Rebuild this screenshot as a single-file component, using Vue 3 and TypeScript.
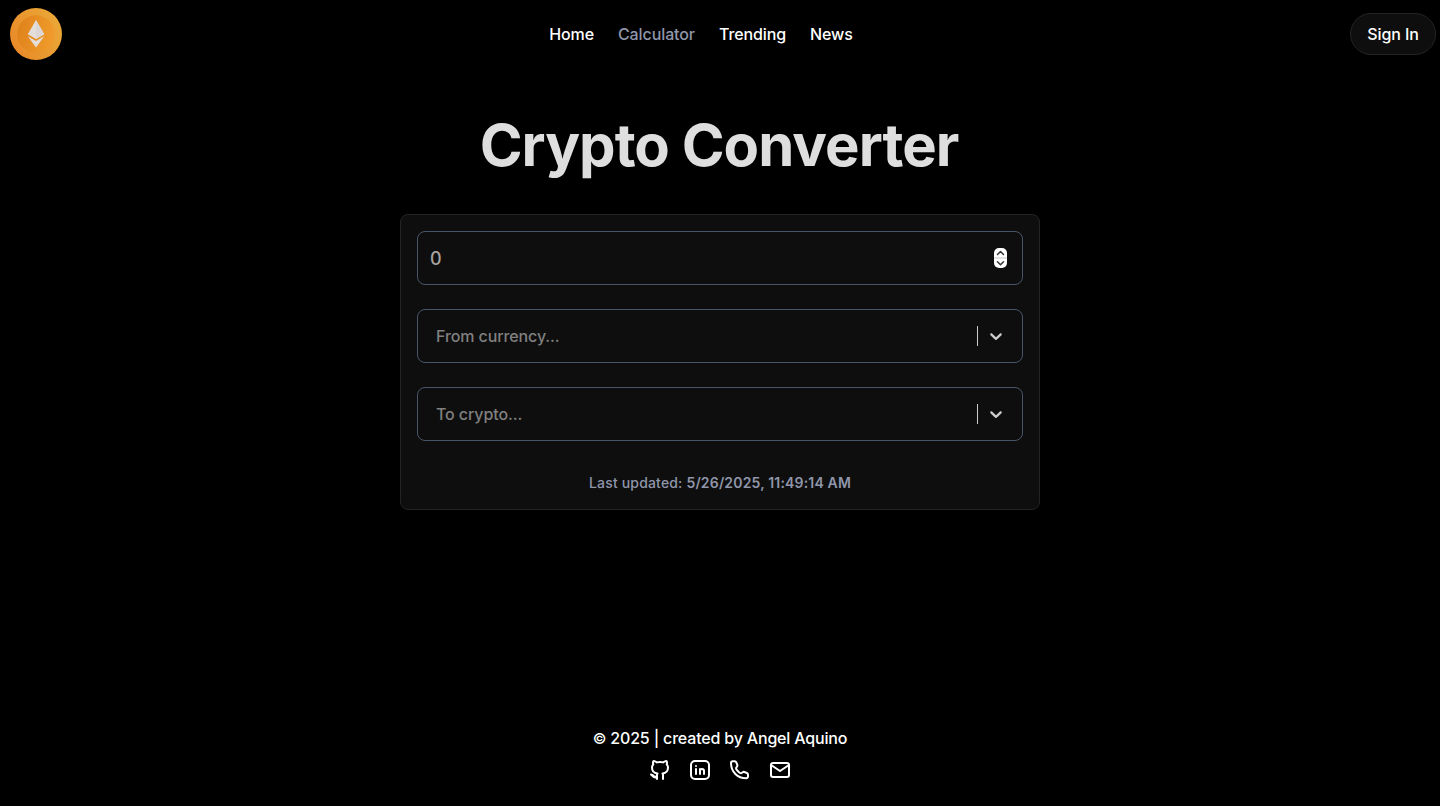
<script setup lang="ts">
import { ref } from 'vue'

interface NavItem {
  label: string
  active?: boolean
}

interface SocialIcon {
  name: string
  paths: string[]
}

const navItems: NavItem[] = [
  { label: 'Home' },
  { label: 'Calculator', active: true },
  { label: 'Trending' },
  { label: 'News' },
]

const selects: string[] = ['From currency...', 'To crypto...']

const socials: SocialIcon[] = [
  {
    name: 'GitHub',
    paths: [
      'M9 21v-3.500c-.1-.8-.1-1.400.5-2-2.800-.3-5.500-1.400-5.500-6 0-1.200.5-2.300 1.300-3.200-.4-1-.4-2.200.1-3.200 0 0 1.100-.3 3.500 1.300a12.300 12.300 0 0 1 6.200 0c2.400-1.600 3.500-1.300 3.500-1.300.5 1 .5 2.200.1 3.200.8.9 1.300 2 1.300 3.200 0 4.600-2.700 5.700-5.500 6 .6.6.5 1 .5 2V21',
      'M9 19.200c-4.300 1.200-4.100-2-6-2.700M9 18.500c-2.500.6-3.400-.3-4.300-1.500',
    ],
  },
  {
    name: 'LinkedIn',
    paths: [
      'M7 3h10a4 4 0 0 1 4 4v10a4 4 0 0 1-4 4H7a4 4 0 0 1-4-4V7a4 4 0 0 1 4-4z',
      'M8 11v5M8 8v.01M12 16v-5M16 16v-3a2 2 0 1 0-4 0',
    ],
  },
  {
    name: 'Phone',
    paths: [
      'M4.800 3.300h1.900a1.800 1.800 0 0 1 1.600 1.100l1 2.500a1.700 1.700 0 0 1-.4 1.800c-1.100 1.100-1.200 1.800-.3 3 .8 1.100 1.900 2.200 3 3 1.200.9 1.900.8 3-.3a1.700 1.700 0 0 1 1.800-.4l2.500 1a1.800 1.800 0 0 1 1.100 1.600v1.900a1.800 1.800 0 0 1-1.800 1.800C9.500 20.300 3 13.800 3 5.100a1.800 1.800 0 0 1 1.800-1.800z',
    ],
  },
  {
    name: 'Email',
    paths: [
      'M5 5h14a2 2 0 0 1 2 2v10a2 2 0 0 1-2 2H5a2 2 0 0 1-2-2V7a2 2 0 0 1 2-2z',
      'M3 7l9 6 9-6',
    ],
  },
]

const amount = ref<string>('')
</script>

<template>
  <div class="page">
    <header class="header">
      <div class="side">
        <a class="logo" aria-label="Home">
          <svg width="52" height="52" viewBox="0 0 52 52">
            <defs>
              <linearGradient id="rim" x1="0.1" y1="0.7" x2="0.9" y2="0.3">
                <stop offset="0" stop-color="#e98c2a" />
                <stop offset="1" stop-color="#eaa636" />
              </linearGradient>
              <linearGradient id="face" x1="0" y1="0.3" x2="1" y2="0.5">
                <stop offset="0" stop-color="#df821b" />
                <stop offset="1" stop-color="#f09c2c" />
              </linearGradient>
            </defs>
            <circle cx="26" cy="26" r="26" fill="url(#rim)" />
            <circle cx="26" cy="26" r="18.700" fill="url(#face)" />
            <path d="M26 12l-8.200 14.200L26 31l8.200-4.800z" fill="#e4dedb" />
            <path d="M26 12v19l8.200-4.800z" fill="#dcd7d6" />
            <path d="M17.800 28.200L26 39.500l8.200-11.300L26 33z" fill="#e4dedb" />
          </svg>
        </a>
      </div>
      <nav class="nav">
        <a v-for="item in navItems" :key="item.label" :class="{ active: item.active }">{{ item.label }}</a>
      </nav>
      <div class="side right">
        <button class="sign-in" type="button">Sign In</button>
      </div>
    </header>

    <main class="main">
      <h1>Crypto Converter</h1>
      <section class="card">
        <div class="field amount">
          <input v-model="amount" type="text" inputmode="decimal" placeholder="0" aria-label="Amount" />
          <svg class="spinner" width="13" height="20" viewBox="0 0 13 20">
            <rect width="13" height="20" rx="5" fill="#fff" />
            <path d="M0 10h13" stroke="#e2e2e2" stroke-width="2" />
            <path
              d="M3.500 6.500l3-3 3 3M3.500 13.800l3 3 3-3"
              fill="none"
              stroke="#333"
              stroke-width="1.500"
              stroke-linecap="round"
              stroke-linejoin="round"
            />
          </svg>
        </div>
        <div v-for="label in selects" :key="label" class="field select">
          <span class="placeholder">{{ label }}</span>
          <span class="separator"></span>
          <svg class="chevron" width="20" height="20" viewBox="0 0 20 20">
            <path
              d="M4.516 7.548c0.436-0.446 1.043-0.481 1.576 0l3.908 3.747 3.908-3.747c0.533-0.481 1.141-0.446 1.574 0 0.436 0.445 0.408 1.197 0 1.615-0.406 0.418-4.695 4.502-4.695 4.502-0.217 0.223-0.502 0.335-0.787 0.335s-0.570-0.112-0.789-0.335c0 0-4.287-4.084-4.695-4.502s-0.436-1.170 0-1.615z"
            />
          </svg>
        </div>
        <p class="updated">Last updated: <strong>5/26/2025, 11:49:14 AM</strong></p>
      </section>
    </main>

    <footer class="footer">
      <p><span class="copy">©</span> 2025 | created by Angel Aquino</p>
      <div class="socials">
        <a v-for="icon in socials" :key="icon.name" :aria-label="icon.name">
          <svg width="24" height="24" viewBox="0 0 24 24">
            <path v-for="d in icon.paths" :key="d" :d="d" />
          </svg>
        </a>
      </div>
    </footer>
  </div>
</template>

<style>
body {
  background: #000;
}
</style>

<style scoped>
.page {
  box-sizing: border-box;
  height: 806px;
  display: flex;
  flex-direction: column;
  background: #000;
  color: #fff;
  font-family: Inter, 'Liberation Sans', sans-serif;
  font-size: 16px;
  font-weight: 550;
  letter-spacing: -0.1px;
  line-height: 24px;
}
.page * {
  box-sizing: border-box;
}
.header {
  height: 68px;
  display: flex;
  align-items: center;
  padding: 0 4px 0 10px;
}
.side {
  width: 86px;
}
.logo,
.logo svg,
.socials a,
.socials svg {
  display: block;
}
.nav {
  flex: 1;
  display: flex;
  justify-content: center;
  gap: 24px;
  padding-right: 44px;
}
.nav .active {
  color: #9096aa;
}
.sign-in {
  width: 86px;
  height: 42px;
  padding: 0;
  border: 1px solid #242424;
  border-radius: 21px;
  background: #0e0e0e;
  color: #fff;
  font: inherit;
  letter-spacing: inherit;
}
.main {
  flex: 1;
  display: flex;
  flex-direction: column;
  align-items: center;
  padding-top: 47px;
}
h1 {
  margin: 0 0 39px;
  padding-right: 2px;
  font-size: 58px;
  font-weight: 700;
  letter-spacing: -0.980px;
  line-height: 60px;
  color: #dedede;
}
.card {
  width: 640px;
  height: 296px;
  padding: 16px;
  border: 1px solid #242424;
  border-radius: 8px;
  background: #0e0e0e;
}
.field {
  height: 54px;
  display: flex;
  align-items: center;
  margin-bottom: 24px;
  border: 1px solid #475569;
  border-radius: 8px;
}
.amount {
  padding: 0 15px 0 12px;
}
input {
  flex: 1;
  min-width: 0;
  padding: 2px 0 0;
  border: 0;
  outline: 0;
  background: transparent;
  color: #dedede;
  font: inherit;
  font-size: 18px;
}
input::placeholder {
  color: #a8a29e;
  opacity: 1;
}
.spinner {
  flex: none;
}
.select {
  padding: 0 16px 0 18px;
}
.placeholder {
  flex: 1;
  color: #808080;
}
.separator {
  width: 1px;
  height: 20px;
  margin-right: 8px;
  background: #ccc;
}
.chevron {
  fill: #ccc;
}
.updated {
  margin: 32px 0 0;
  text-align: center;
  font-size: 14px;
  letter-spacing: 0.170px;
  line-height: 20px;
  color: #9096aa;
}
.updated strong {
  font-weight: 600;
}
.footer {
  display: flex;
  flex-direction: column;
  align-items: center;
  gap: 8px;
  padding-bottom: 24px;
}
.footer p {
  height: 24px;
  margin: 0;
  letter-spacing: -0.18px;
}
.copy {
  font-size: 15px;
  line-height: 1;
}
.socials {
  display: flex;
  gap: 16px;
}
.socials svg {
  fill: none;
  stroke: #fff;
  stroke-width: 2;
  stroke-linecap: round;
  stroke-linejoin: round;
}
</style>
